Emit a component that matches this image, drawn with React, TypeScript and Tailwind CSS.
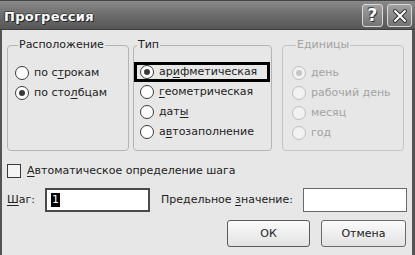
import React from "react";

const font = { fontFamily: '"DejaVu Sans", "Noto Sans", sans-serif' };

function Radio({ checked, disabled }: { checked?: boolean; disabled?: boolean }) {
  return (
    <span
      className={
        "flex items-center justify-center w-[14px] h-[14px] rounded-full border shrink-0 " +
        (disabled ? "border-[#bdbdbd] bg-[#f2f2f2]" : "border-[#3a3a3a] bg-white")
      }
    >
      {checked && (
        <span className={"w-[6px] h-[6px] rounded-full " + (disabled ? "bg-[#c4c4c4]" : "bg-[#3a3a3a]")} />
      )}
    </span>
  );
}

function Row({ children, checked, disabled }: { children: React.ReactNode; checked?: boolean; disabled?: boolean }) {
  return (
    <div className="flex items-center h-[20px] gap-[5px]">
      <Radio checked={checked} disabled={disabled} />
      <span className={disabled ? "text-[#a3a3a3]" : "text-[#222]"}>{children}</span>
    </div>
  );
}

export default function App() {
  return (
    <div className="w-[415px] h-[255px] overflow-hidden flex flex-col bg-[#e7e7e7] text-[11px] leading-[14px]" style={font}>
      {/* Title bar */}
      <div className="h-[30px] shrink-0 flex items-center justify-between pl-[4px] pr-[3px] bg-gradient-to-b from-[#8a8a8a] via-[#6c6c6c] to-[#575757] border-t border-[#444] border-b border-b-[#3e3e3e]">
        <span
          className="text-white font-bold text-[13px] leading-none tracking-[0.3px] mt-[2px]"
          style={{ textShadow: "1px 1px 0 #222, -1px 0 0 #333, 0 -1px 0 #444" }}
        >
          Прогрессия
        </span>
        <div className="flex items-center gap-[4px] self-start mt-[3px]">
          <div className="w-[21px] h-[23px] rounded-[3px] border border-[#d8d8d8] bg-gradient-to-b from-[#a0a0a0] to-[#747474] flex items-center justify-center">
            <span
              className="text-white font-bold text-[17px] leading-none"
              style={{ textShadow: "1px 1px 0 #333, -1px -1px 0 #444" }}
            >
              ?
            </span>
          </div>
          <div className="w-[25px] h-[23px] rounded-[3px] border border-[#d8d8d8] bg-gradient-to-b from-[#a0a0a0] to-[#747474] flex items-center justify-center">
            <svg width="16" height="16" viewBox="0 0 16 16">
              <path d="M3 3 L13 13 M13 3 L3 13" stroke="#333" strokeWidth="4" strokeLinecap="round" />
              <path d="M3 3 L13 13 M13 3 L3 13" stroke="#fff" strokeWidth="2" strokeLinecap="round" />
            </svg>
          </div>
        </div>
      </div>

      {/* Body */}
      <div className="flex-1 flex flex-col border-l-2 border-r-[3px] border-[#555] pl-[5px] pt-[8px]">
        <div className="flex items-start">
          <fieldset className="w-[122px] h-[113px] border border-[#b4b4b4] rounded-[4px] pl-[7px] pt-[11px]">
            <legend className="ml-[3px] px-[1px] text-[#222]">Расположение</legend>
            <Row>
              по с<u className="underline-offset-2">т</u>рокам
            </Row>
            <Row checked>
              по сто<u className="underline-offset-2">л</u>бцам
            </Row>
          </fieldset>

          <fieldset className="ml-[4px] w-[139px] h-[113px] border border-[#b4b4b4] rounded-[4px] pt-[10px]">
            <legend className="ml-[3px] px-[1px] text-[#222]">Тип</legend>
            <div className="border-[3px] border-black ml-0 mr-[1px] pl-[3px]">
              <div className="flex items-center h-[14px] gap-[5px]">
                <Radio checked />
                <span className="text-[#222]">
                  ар<u className="underline-offset-2">и</u>фметическая
                </span>
              </div>
            </div>
            <div className="pl-[6px]">
              <Row>
                <u className="underline-offset-2">г</u>еометрическая
              </Row>
              <Row>
                дат<u className="underline-offset-2">ы</u>
              </Row>
              <Row>
                а<u className="underline-offset-2">в</u>тозаполнение
              </Row>
            </div>
          </fieldset>

          <fieldset className="ml-[10px] w-[122px] h-[113px] border border-[#c4c4c4] rounded-[4px] pl-[9px] pt-[11px]">
            <legend className="ml-[4px] px-[1px] text-[#a3a3a3]">Единицы</legend>
            <Row checked disabled>день</Row>
            <Row disabled>рабочий день</Row>
            <Row disabled>месяц</Row>
            <Row disabled>год</Row>
          </fieldset>
        </div>

        {/* Checkbox */}
        <div className="flex items-center gap-[6px] mt-[12px] h-[16px]">
          <span className="w-[14px] h-[14px] border border-[#3a3a3a] bg-[#f4f4f4]" />
          <span className="text-[#222]">
            <u className="underline-offset-2">А</u>втоматическое определение шага
          </span>
        </div>

        {/* Step row */}
        <div className="flex items-center mt-[9px] h-[24px]">
          <span className="w-[38px] text-[#222]">
            <u className="underline-offset-2">Ш</u>аг:
          </span>
          <div className="w-[105px] h-[24px] border-2 border-[#4a4a4a] bg-white flex items-center pl-[4px]">
            <span className="bg-black text-white px-[1px] leading-[14px]">1</span>
          </div>
          <span className="ml-[11px] text-[#222] whitespace-nowrap">
            Предельное <u className="underline-offset-2">з</u>начение:
          </span>
          <div className="ml-auto mr-[5px] w-[104px] h-[24px] border border-[#6a6a6a] bg-white" />
        </div>

        {/* Buttons */}
        <div className="flex mt-[8px] pl-[220px] gap-[11px]">
          <button className="w-[83px] h-[27px] rounded-[3px] border border-[#5a5a5a] bg-gradient-to-b from-[#fbfbfb] to-[#e2e2e2] text-[#222] text-[11px]">
            ОК
          </button>
          <button className="w-[85px] h-[27px] rounded-[3px] border border-[#6a6a6a] bg-gradient-to-b from-[#fbfbfb] to-[#e2e2e2] text-[#222] text-[11px]">
            Отмена
          </button>
        </div>
      </div>
    </div>
  );
}
